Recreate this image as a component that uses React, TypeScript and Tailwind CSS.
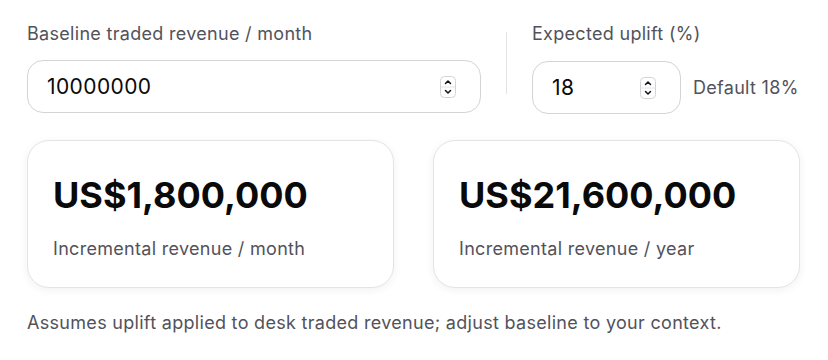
import { useState } from 'react'

function Stepper() {
  return (
    <svg width="16" height="22" viewBox="0 0 16 22" className="shrink-0">
      <rect x="0.5" y="0.5" width="15" height="21" rx="4" fill="#fff" stroke="#d4d4d8" />
      <line x1="1" y1="11" x2="15" y2="11" stroke="#e4e4e7" />
      <path d="M5.5 7.5 L8 5 L10.5 7.5" fill="none" stroke="#111" strokeWidth="1.5" strokeLinecap="round" strokeLinejoin="round" />
      <path d="M5.5 14.5 L8 17 L10.5 14.5" fill="none" stroke="#111" strokeWidth="1.5" strokeLinecap="round" strokeLinejoin="round" />
    </svg>
  )
}

function fmt(n: number): string {
  return 'US$' + Math.round(n).toLocaleString('en-US')
}

function ResultCard({ value, label }: { value: string; label: string }) {
  return (
    <div className="flex-1 rounded-[22px] border border-[#e4e4e7] bg-white px-[25px] pt-[32px] pb-[26px] shadow-[0_2px_10px_rgba(0,0,0,0.06)]">
      <div className="text-[36px] font-bold leading-[44px] tracking-[0px] text-[#0a0a0a]">{value}</div>
      <div className="mt-[20px] text-[18px] leading-[24px] tracking-[0.3px] text-[#52525b]">{label}</div>
    </div>
  )
}

export default function App() {
  const [baseline, setBaseline] = useState('10000000')
  const [uplift, setUplift] = useState('18')

  const monthly = (Number(baseline) || 0) * ((Number(uplift) || 0) / 100)

  return (
    <div className="min-h-[360px] w-[828px] bg-white px-[27px] pt-[22px] font-['Inter',sans-serif] text-[#111]">
      <div className="flex">
        <div className="w-[454px]">
          <div className="text-[18px] leading-[24px] tracking-[0.3px] text-[#52525b]">Baseline traded revenue / month</div>
          <div className="mt-[14px] flex h-[53px] items-center rounded-[16px] border border-[#d4d4d8] pl-[19px] pr-[24px]">
            <input
              value={baseline}
              onChange={(e) => setBaseline(e.target.value)}
              className="min-w-0 flex-1 bg-transparent text-[21px] tracking-[0.4px] text-[#0a0a0a] outline-none"
            />
            <Stepper />
          </div>
        </div>
        <div className="mx-[25px] mt-[10px] h-[62px] w-px bg-[#e4e4e7]" />
        <div>
          <div className="text-[18px] leading-[24px] tracking-[0.3px] text-[#52525b]">Expected uplift (%)</div>
          <div className="mt-[15px] flex items-center gap-[12px]">
            <div className="flex h-[53px] w-[149px] items-center rounded-[16px] border border-[#d4d4d8] pl-[19px] pr-[24px]">
              <input
                value={uplift}
                onChange={(e) => setUplift(e.target.value)}
                className="min-w-0 flex-1 bg-transparent text-[21px] tracking-[0.4px] text-[#0a0a0a] outline-none"
              />
              <Stepper />
            </div>
            <span className="text-[18px] tracking-[0.3px] text-[#52525b]">Default 18%</span>
          </div>
        </div>
      </div>

      <div className="mt-[26px] flex w-[773px] gap-[39px]">
        <ResultCard value={fmt(monthly)} label="Incremental revenue / month" />
        <ResultCard value={fmt(monthly * 12)} label="Incremental revenue / year" />
      </div>

      <p className="mt-[23px] text-[18px] leading-[24px] tracking-[0.3px] text-[#52525b]">
        Assumes uplift applied to desk traded revenue; adjust baseline to your context.
      </p>
    </div>
  )
}
